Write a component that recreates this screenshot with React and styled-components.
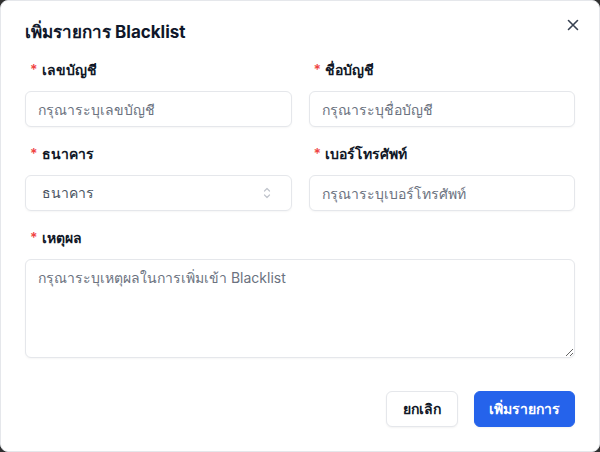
import React from "react";
import styled, { createGlobalStyle } from "styled-components";

const Global = createGlobalStyle`
  html, body { margin: 0; padding: 0; background: #2f2f2f; }
  body { font-family: Inter, "Noto Sans", "DejaVu Sans", sans-serif; }
  * { box-sizing: border-box; }
`;

const Dialog = styled.div`
  position: relative;
  width: 600px;
  height: 452px;
  background: #ffffff;
  border: 1px solid #e5e7eb;
  border-radius: 8px;
  padding: 17px 24px 24px 24px;
  display: flex;
  flex-direction: column;
`;

const Title = styled.h2`
  margin: 0;
  font-size: 17px;
  line-height: 28px;
  font-weight: 700;
  color: #0f172a;
`;

const Close = styled.button`
  position: absolute;
  top: 16px;
  right: 18px;
  width: 16px;
  height: 16px;
  padding: 0;
  border: none;
  background: transparent;
  color: #374151;
  display: flex;
  align-items: center;
  justify-content: center;
`;

const Form = styled.div`
  margin-top: 14px;
  display: grid;
  grid-template-columns: 1fr 1fr;
  column-gap: 17px;
  row-gap: 17px;
`;

const Field = styled.div`
  display: flex;
  flex-direction: column;
  gap: 11px;
  grid-column: ${(p) => (p.$full ? "1 / -1" : "auto")};
`;

const Label = styled.label`
  font-size: 14px;
  line-height: 20px;
  font-weight: 600;
  color: #111827;
  display: flex;
  align-items: center;
  gap: 4px;
  padding-left: 5px;
`;

const Star = styled.span`
  color: #ef4444;
  font-weight: 600;
`;

const Input = styled.input`
  height: 36px;
  width: 100%;
  border: 1px solid #e5e7eb;
  border-radius: 6px;
  padding: 0 12px;
  font-family: inherit;
  font-size: 14px;
  color: #111827;
  background: #fff;
  box-shadow: 0 1px 2px rgba(0, 0, 0, 0.04);
  &::placeholder { color: #6b7280; }
`;

const Select = styled.div`
  height: 36px;
  border: 1px solid #e5e7eb;
  border-radius: 6px;
  padding: 0 20px 0 16px;
  display: flex;
  align-items: center;
  justify-content: space-between;
  font-size: 14px;
  font-weight: 500;
  color: #4b5563;
  box-shadow: 0 1px 2px rgba(0, 0, 0, 0.04);
`;

const TextArea = styled.textarea`
  height: 99px;
  width: 100%;
  border: 1px solid #e5e7eb;
  border-radius: 6px;
  padding: 8px 12px;
  font-family: inherit;
  font-size: 14px;
  line-height: 20px;
  color: #111827;
  resize: vertical;
  box-shadow: 0 1px 2px rgba(0, 0, 0, 0.04);
  &::placeholder { color: #6b7280; }
`;

const Footer = styled.div`
  margin-top: auto;
  display: flex;
  justify-content: flex-end;
  gap: 16px;
`;

const Button = styled.button`
  height: 36px;
  padding: 0 ${(p) => (p.$primary ? "14px" : "16px")};
  border-radius: 6px;
  font-family: inherit;
  font-size: 14px;
  font-weight: 600;
  border: 1px solid ${(p) => (p.$primary ? "#2563eb" : "#e5e7eb")};
  background: ${(p) => (p.$primary ? "#2563eb" : "#ffffff")};
  color: ${(p) => (p.$primary ? "#ffffff" : "#111827")};
  box-shadow: 0 1px 2px rgba(0, 0, 0, 0.05);
`;

export default function App() {
  return (
    <>
      <Global />
      <Dialog>
        <Title>เพิ่มรายการ Blacklist</Title>
        <Close aria-label="close">
          <svg width="12" height="12" viewBox="0 0 12 12" fill="none" stroke="currentColor" strokeWidth="1.6" strokeLinecap="round">
            <path d="M1.5 1.5 L10.5 10.5 M10.5 1.5 L1.5 10.5" />
          </svg>
        </Close>
        <Form>
          <Field>
            <Label><Star>*</Star>เลขบัญชี</Label>
            <Input placeholder="กรุณาระบุเลขบัญชี" />
          </Field>
          <Field>
            <Label><Star>*</Star>ชื่อบัญชี</Label>
            <Input placeholder="กรุณาระบุชื่อบัญชี" />
          </Field>
          <Field>
            <Label><Star>*</Star>ธนาคาร</Label>
            <Select>
              <span>ธนาคาร</span>
              <svg width="8" height="12" viewBox="0 0 8 12" fill="none" stroke="#c0c4cc" strokeWidth="1.2" strokeLinecap="round" strokeLinejoin="round">
                <path d="M1.5 4 L4 1.5 L6.5 4 M1.5 8 L4 10.5 L6.5 8" />
              </svg>
            </Select>
          </Field>
          <Field>
            <Label><Star>*</Star>เบอร์โทรศัพท์</Label>
            <Input placeholder="กรุณาระบุเบอร์โทรศัพท์" />
          </Field>
          <Field $full>
            <Label><Star>*</Star>เหตุผล</Label>
            <TextArea placeholder="กรุณาระบุเหตุผลในการเพิ่มเข้า Blacklist" />
          </Field>
        </Form>
        <Footer>
          <Button>ยกเลิก</Button>
          <Button $primary>เพิ่มรายการ</Button>
        </Footer>
      </Dialog>
    </>
  );
}
